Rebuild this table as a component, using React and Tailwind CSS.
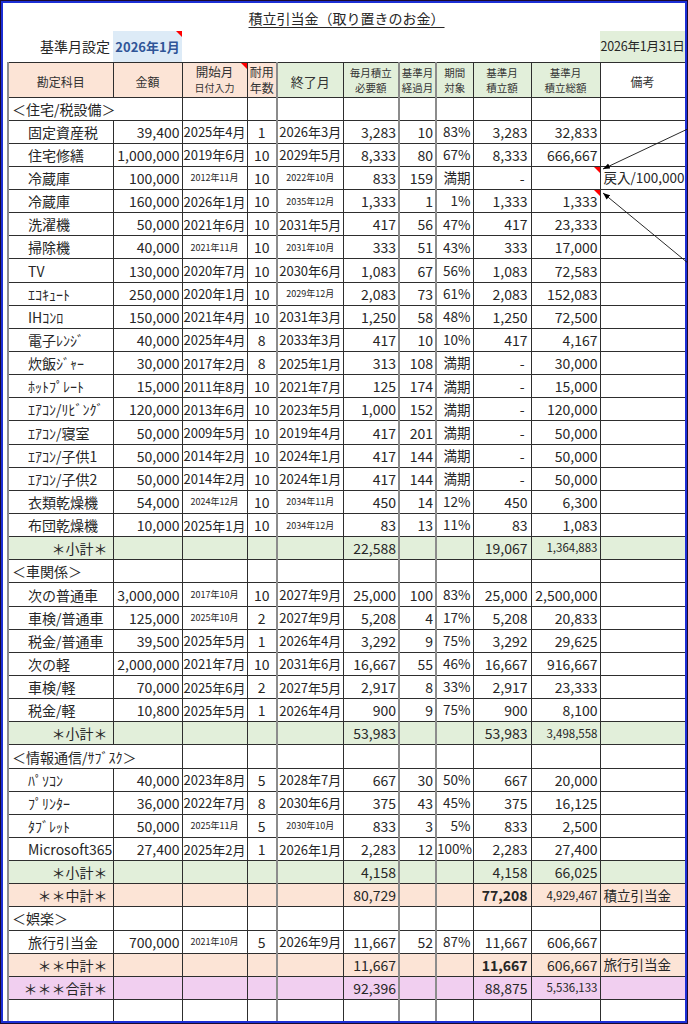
import React from "react";

const GREEN = "bg-[#e2efda]";
const PEACH = "bg-[#fce4d6]";
const PINK = "bg-[#f1cff0]";

const COL = [
  "border-l-2 border-l-[#8c8c8c] text-left",
  "text-right pr-[2px]",
  "text-center",
  "text-center",
  "border-l-2 border-l-[#8c8c8c] text-center",
  "text-right pr-[2px]",
  "border-l-2 border-l-[#8c8c8c] text-right pr-[2px]",
  "border-l-2 border-l-[#8c8c8c] text-right pr-[2px]",
  "text-right pr-[3px]",
  "text-right pr-[2px]",
  "text-left pl-[3px]",
];

const CELL =
  "border border-[#2e2e2e] leading-none whitespace-nowrap p-0 align-middle";

const WIDTHS = [105, 69, 65, 30, 66, 56, 37, 37, 58, 69, 85];

const Tri = () => (
  <span className="absolute right-0 top-0 h-0 w-0 border-l-[6px] border-t-[6px] border-l-transparent border-t-[#ff0000]" />
);

const items1 = [
  ["固定資産税", "39,400", "2025年4月", "1", "2026年3月", "3,283", "10", "83%", "3,283", "32,833", ""],
  ["住宅修繕", "1,000,000", "2019年6月", "10", "2029年5月", "8,333", "80", "67%", "8,333", "666,667", ""],
  ["冷蔵庫", "100,000", "2012年11月", "10", "2022年10月", "833", "159", "満期", "-", "", "戻入/100,000", "tri"],
  ["冷蔵庫", "160,000", "2026年1月", "10", "2035年12月", "1,333", "1", "1%", "1,333", "1,333", "", "tri"],
  ["洗濯機", "50,000", "2021年6月", "10", "2031年5月", "417", "56", "47%", "417", "23,333", ""],
  ["掃除機", "40,000", "2021年11月", "10", "2031年10月", "333", "51", "43%", "333", "17,000", ""],
  ["TV", "130,000", "2020年7月", "10", "2030年6月", "1,083", "67", "56%", "1,083", "72,583", ""],
  ["ｴｺｷｭｰﾄ", "250,000", "2020年1月", "10", "2029年12月", "2,083", "73", "61%", "2,083", "152,083", ""],
  ["IHｺﾝﾛ", "150,000", "2021年4月", "10", "2031年3月", "1,250", "58", "48%", "1,250", "72,500", ""],
  ["電子ﾚﾝｼﾞ", "40,000", "2025年4月", "8", "2033年3月", "417", "10", "10%", "417", "4,167", ""],
  ["炊飯ｼﾞｬｰ", "30,000", "2017年2月", "8", "2025年1月", "313", "108", "満期", "-", "30,000", ""],
  ["ﾎｯﾄﾌﾟﾚｰﾄ", "15,000", "2011年8月", "10", "2021年7月", "125", "174", "満期", "-", "15,000", ""],
  ["ｴｱｺﾝ/ﾘﾋﾞﾝｸﾞ", "120,000", "2013年6月", "10", "2023年5月", "1,000", "152", "満期", "-", "120,000", ""],
  ["ｴｱｺﾝ/寝室", "50,000", "2009年5月", "10", "2019年4月", "417", "201", "満期", "-", "50,000", ""],
  ["ｴｱｺﾝ/子供1", "50,000", "2014年2月", "10", "2024年1月", "417", "144", "満期", "-", "50,000", ""],
  ["ｴｱｺﾝ/子供2", "50,000", "2014年2月", "10", "2024年1月", "417", "144", "満期", "-", "50,000", ""],
  ["衣類乾燥機", "54,000", "2024年12月", "10", "2034年11月", "450", "14", "12%", "450", "6,300", ""],
  ["布団乾燥機", "10,000", "2025年1月", "10", "2034年12月", "83", "13", "11%", "83", "1,083", ""],
];

const items2 = [
  ["次の普通車", "3,000,000", "2017年10月", "10", "2027年9月", "25,000", "100", "83%", "25,000", "2,500,000", ""],
  ["車検/普通車", "125,000", "2025年10月", "2", "2027年9月", "5,208", "4", "17%", "5,208", "20,833", ""],
  ["税金/普通車", "39,500", "2025年5月", "1", "2026年4月", "3,292", "9", "75%", "3,292", "29,625", ""],
  ["次の軽", "2,000,000", "2021年7月", "10", "2031年6月", "16,667", "55", "46%", "16,667", "916,667", ""],
  ["車検/軽", "70,000", "2025年6月", "2", "2027年5月", "2,917", "8", "33%", "2,917", "23,333", ""],
  ["税金/軽", "10,800", "2025年5月", "1", "2026年4月", "900", "9", "75%", "900", "8,100", ""],
];

const items3 = [
  ["ﾊﾟｿｺﾝ", "40,000", "2023年8月", "5", "2028年7月", "667", "30", "50%", "667", "20,000", ""],
  ["ﾌﾟﾘﾝﾀｰ", "36,000", "2022年7月", "8", "2030年6月", "375", "43", "45%", "375", "16,125", ""],
  ["ﾀﾌﾞﾚｯﾄ", "50,000", "2025年11月", "5", "2030年10月", "833", "3", "5%", "833", "2,500", ""],
  ["Microsoft365", "27,400", "2025年2月", "1", "2026年1月", "2,283", "12", "100%", "2,283", "27,400", ""],
];

const items4 = [
  ["旅行引当金", "700,000", "2021年10月", "5", "2026年9月", "11,667", "52", "87%", "11,667", "606,667", ""],
];

const isSmallDate = (d) => /年\d\d月/.test(d);

function ItemRow({ r }) {
  const [name, amt, start, yrs, end, mon, el, pct, acc, total, note, tri] = r;
  return (
    <tr className="h-[23.15px]">
      <td className={`${CELL} ${COL[0]} pl-[19px] text-[14px]`}>{name}</td>
      <td className={`${CELL} ${COL[1]} text-[14px]`}>{amt}</td>
      <td className={`${CELL} ${COL[2]} ${isSmallDate(start) ? "text-[9px]" : "text-[13px]"}`}>{start}</td>
      <td className={`${CELL} ${COL[3]} text-[14px]`}>{yrs}</td>
      <td className={`${CELL} ${COL[4]} ${isSmallDate(end) ? "text-[9px]" : "text-[13px]"}`}>{end}</td>
      <td className={`${CELL} ${COL[5]} text-[14px]`}>{mon}</td>
      <td className={`${CELL} ${COL[6]} text-[14px]`}>{el}</td>
      <td className={`${CELL} ${COL[7]} text-[13.5px]`}>{pct}</td>
      <td className={`${CELL} ${COL[8]} text-[14px] ${acc === "-" ? "pr-[6px]" : ""}`}>{acc}</td>
      <td className={`${CELL} ${COL[9]} relative text-[14px]`}>
        {total}
        {tri ? <Tri /> : null}
      </td>
      <td className={`${CELL} ${COL[10]} text-[13.5px]`}>{note}</td>
    </tr>
  );
}

function CatRow({ label, span }) {
  const cells = [];
  for (let i = span ? 2 : 1; i < 11; i++) {
    cells.push(<td key={i} className={`${CELL} ${COL[i]}`} />);
  }
  return (
    <tr className="h-[23.15px]">
      <td colSpan={span ? 2 : 1} className={`${CELL} ${COL[0]} pl-[3px] text-[14px]`}>
        {label}
      </td>
      {cells}
    </tr>
  );
}

function SumRow({ label, bg, mon, acc, total, totalSmall, bold, note }) {
  return (
    <tr className={`h-[23.15px] ${bg}`}>
      <td className={`${CELL} ${COL[0]} !text-right pr-[5px] text-[14px]`}>{label}</td>
      <td className={`${CELL} ${COL[1]}`} />
      <td className={`${CELL} ${COL[2]}`} />
      <td className={`${CELL} ${COL[3]}`} />
      <td className={`${CELL} ${COL[4]}`} />
      <td className={`${CELL} ${COL[5]} text-[14px]`}>{mon}</td>
      <td className={`${CELL} ${COL[6]}`} />
      <td className={`${CELL} ${COL[7]}`} />
      <td className={`${CELL} ${COL[8]} text-[14px] ${bold ? "font-bold" : ""}`}>{acc}</td>
      <td className={`${CELL} ${COL[9]} ${totalSmall ? "text-[11.5px]" : "text-[14px]"}`}>{total}</td>
      <td className={`${CELL} ${COL[10]} text-[13.5px]`}>{note}</td>
    </tr>
  );
}

function EmptyRow() {
  return (
    <tr className="h-[23.15px]">
      {WIDTHS.map((_, i) => (
        <td key={i} className={`${CELL} ${COL[i]}`} />
      ))}
    </tr>
  );
}

function Head({ bg, children, tri, i }) {
  return (
    <td className={`${CELL} ${COL[i]} !text-center !p-0 ${bg} relative text-[#333]`}>
      {children}
      {tri ? <Tri /> : null}
    </td>
  );
}

export default function App() {
  return (
    <div className="relative h-[1024px] w-[688px] overflow-hidden border border-[#1a0a30] bg-white font-['Noto_Sans_CJK_JP','Noto_Sans',sans-serif] text-[#262626]">
      <div className="h-full w-full overflow-hidden border-2 border-[#1c2fd6] pl-[4px]">
        <table className="table-fixed border-collapse w-[677px]">
          <colgroup>
            {WIDTHS.map((w, i) => (
              <col key={i} style={{ width: w }} />
            ))}
          </colgroup>
          <tbody>
            <tr className="h-[28px]">
              <td colSpan={11} className="p-0 text-center align-middle">
                <span className="text-[14px] leading-none underline underline-offset-[3px]">
                  積立引当金（取り置きのお金）
                </span>
              </td>
            </tr>
            <tr className="h-[31px]">
              <td className="p-0 pr-[3px] text-right align-middle text-[14px] leading-none">基準月設定</td>
              <td className="relative bg-[#ddebf7] p-0 text-center align-middle text-[13px] font-bold leading-none text-[#2f5597]">
                2026年1月
                <Tri />
              </td>
              <td colSpan={8} className="p-0" />
              <td className="bg-[#e2efda] p-0 text-center align-middle text-[12.5px] leading-none tracking-[-0.2px]">
                2026年1月31日
              </td>
            </tr>
            <tr className="h-[35px]">
              <Head i={0} bg={PEACH}><span className="text-[12px]">勘定科目</span></Head>
              <Head i={1} bg={PEACH}><span className="text-[12px]">金額</span></Head>
              <Head i={2} bg={PEACH} tri>
                <div className="text-[12.5px] leading-[14px]">開始月</div>
                <div className="mt-[3px] text-[10px] leading-[12px]">日付入力</div>
              </Head>
              <Head i={3} bg={PEACH}>
                <div className="text-[12px] leading-[16px]">耐用</div>
                <div className="text-[12px] leading-[16px]">年数</div>
              </Head>
              <Head i={4} bg={GREEN}><span className="text-[13px]">終了月</span></Head>
              <Head i={5} bg={GREEN}>
                <div className="text-[10.5px] leading-[15px]">毎月積立</div>
                <div className="text-[10.5px] leading-[15px]">必要額</div>
              </Head>
              <Head i={6} bg={GREEN}>
                <div className="text-[10.5px] leading-[15px]">基準月</div>
                <div className="text-[10.5px] leading-[15px]">経過月</div>
              </Head>
              <Head i={7} bg={GREEN}>
                <div className="text-[10.5px] leading-[15px]">期間</div>
                <div className="text-[10.5px] leading-[15px]">対象</div>
              </Head>
              <Head i={8} bg={GREEN}>
                <div className="text-[10.5px] leading-[15px]">基準月</div>
                <div className="text-[10.5px] leading-[15px]">積立額</div>
              </Head>
              <Head i={9} bg={GREEN}>
                <div className="text-[10.5px] leading-[15px]">基準月</div>
                <div className="text-[10.5px] leading-[15px]">積立総額</div>
              </Head>
              <Head i={10} bg="bg-white"><span className="text-[12px]">備考</span></Head>
            </tr>

            <CatRow label="＜住宅/税設備＞" span />
            {items1.map((r, i) => (
              <ItemRow key={"a" + i} r={r} />
            ))}
            <SumRow label="＊小計＊" bg={GREEN} mon="22,588" acc="19,067" total="1,364,883" totalSmall />

            <CatRow label="＜車関係＞" />
            {items2.map((r, i) => (
              <ItemRow key={"b" + i} r={r} />
            ))}
            <SumRow label="＊小計＊" bg={GREEN} mon="53,983" acc="53,983" total="3,498,558" totalSmall />

            <CatRow label="＜情報通信/ｻﾌﾞｽｸ＞" span />
            {items3.map((r, i) => (
              <ItemRow key={"c" + i} r={r} />
            ))}
            <SumRow label="＊小計＊" bg={GREEN} mon="4,158" acc="4,158" total="66,025" />
            <SumRow label="＊＊中計＊" bg={PEACH} mon="80,729" acc="77,208" bold total="4,929,467" totalSmall note="積立引当金" />

            <CatRow label="＜娯楽＞" />
            {items4.map((r, i) => (
              <ItemRow key={"d" + i} r={r} />
            ))}
            <SumRow label="＊＊中計＊" bg={PEACH} mon="11,667" acc="11,667" bold total="606,667" note="旅行引当金" />
            <SumRow label="＊＊＊合計＊" bg={PINK} mon="92,396" acc="88,875" total="5,536,133" totalSmall />
            <EmptyRow />
          </tbody>
        </table>
      </div>

      <svg
        className="pointer-events-none absolute left-0 top-0"
        width="688"
        height="1024"
        viewBox="-1 -1 688 1024"
      >
        <defs>
          <marker
            id="ah"
            viewBox="0 0 10 10"
            refX="10"
            refY="5"
            markerUnits="userSpaceOnUse"
            markerWidth="7"
            markerHeight="7"
            orient="auto"
          >
            <path d="M0,1 L10,5 L0,9 z" fill="#000" />
          </marker>
        </defs>
        <line x1="692" y1="124" x2="601" y2="167" stroke="#111" strokeWidth="0.9" markerEnd="url(#ah)" />
        <line x1="692" y1="266" x2="601" y2="191" stroke="#111" strokeWidth="0.9" markerEnd="url(#ah)" />
      </svg>
    </div>
  );
}
